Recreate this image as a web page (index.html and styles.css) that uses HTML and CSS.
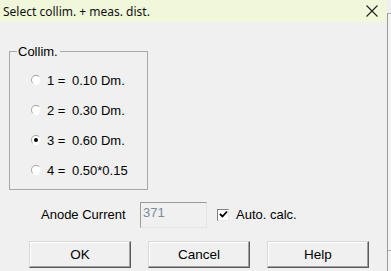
FILE: index.html
```html
<!DOCTYPE html>
<html lang="en">
<head>
    <meta charset="UTF-8">
    <title>Select collim. + meas. dist.</title>
    <link rel="stylesheet" href="styles.css">
</head>
<body>
    <div class="screen">
        <div class="dialog">
            <div class="titlebar">
                <span class="title">Select collim. + meas. dist.</span>
                <span class="close">
                    <svg width="12" height="12" viewBox="0 0 12 12"><path d="M0.5 0.5 L11.5 11.5 M11.5 0.5 L0.5 11.5" stroke="#202020" stroke-width="1.1" fill="none"/></svg>
                </span>
            </div>
            <div class="content">
                <fieldset class="group">
                    <legend>Collim.</legend>
                    <div class="radio-row">
                        <span class="radio"></span>
                        <span class="num">1 =</span><span>0.10 Dm.</span>
                    </div>
                    <div class="radio-row">
                        <span class="radio"></span>
                        <span class="num">2 =</span><span>0.30 Dm.</span>
                    </div>
                    <div class="radio-row">
                        <span class="radio checked"></span>
                        <span class="num">3 =</span><span>0.60 Dm.</span>
                    </div>
                    <div class="radio-row">
                        <span class="radio"></span>
                        <span class="num">4 =</span><span>0.50*0.15</span>
                    </div>
                </fieldset>
                <div class="anode-row">
                    <span class="label">Anode Current</span>
                    <div class="textbox">371</div>
                    <span class="checkbox">
                        <svg width="9" height="9" viewBox="0 0 9 9"><path d="M1 4 L3.5 6.5 L8 1.5" stroke="#000" stroke-width="1.8" fill="none"/></svg>
                    </span>
                    <span>Auto. calc.</span>
                </div>
                <div class="buttons">
                    <div class="btn">OK</div>
                    <div class="btn">Cancel</div>
                    <div class="btn">Help</div>
                </div>
            </div>
        </div>
        <div class="edge"><div class="stub"></div></div>
    </div>
</body>
</html>
```
FILE: styles.css
```css
* { margin: 0; padding: 0; box-sizing: border-box; }
body { background-color: #f0f0f0; color: #000000; font-family: 'Liberation Sans', Arial, sans-serif; font-size: 13px; width: 391px; height: 271px; overflow: hidden; }
.screen { display: flex; height: 271px; }
.dialog { width: 387px; height: 271px; display: flex; flex-direction: column; }
.titlebar { height: 22px; background-color: #f0f7da; display: flex; align-items: center; justify-content: space-between; padding-left: 3px; padding-right: 9px; }
.title { font-family: 'Noto Sans', sans-serif; font-size: 12px; color: #111111; }
.close { display: flex; margin-top: -1px; }
.content { flex: 1; }
.group { margin: 22px 0 0 9px; width: 139px; height: 146px; border: 1px solid #a8a8a8; padding: 6px 0 0 0; }
.group legend { margin-left: 7px; padding: 0 2px 0 1px; line-height: 15px; }
.radio-row { height: 30px; display: flex; align-items: center; padding-left: 21px; }
.radio { width: 10px; height: 10px; border-radius: 50%; border: 1px solid; border-color: #a4a4a4 #f4f4f4 #ffffff #aaaaaa; background-color: #ffffff; margin-right: 6px; display: flex; align-items: center; justify-content: center; }
.radio.checked::after { content: ''; width: 4px; height: 4px; border-radius: 50%; background-color: #000000; }
.num { width: 25px; }
.anode-row { display: flex; align-items: center; margin: 11px 0 0 41px; height: 27px; }
.label { width: 99px; }
.textbox { width: 67px; height: 26px; border: 1px solid; border-color: #9c9c9c #e4e4e4 #e4e4e4 #9c9c9c; color: #7d8a99; padding: 3px 0 0 2px; line-height: 14px; }
.checkbox { width: 12px; height: 12px; margin: 0 7px 0 10px; background-color: #ffffff; border: 1px solid; border-color: #808080 #e8e8e8 #e8e8e8 #808080; display: flex; align-items: center; justify-content: center; }
.buttons { display: flex; gap: 17px; margin: 13px 0 0 29px; }
.btn { width: 102px; height: 27px; display: flex; align-items: center; justify-content: center; border: 1px solid; border-color: #d8d8d8 #5a5a5a #5a5a5a #d8d8d8; box-shadow: inset -1px -1px 0 #a0a0a0, inset 1px 1px 0 #ffffff; font-size: 13.5px; }
.edge { flex: 1; margin-top: 13px; border-left: 1px solid #9a9a9a; border-top: 1px solid #b0b0b0; background-color: #f4f4f4; position: relative; }
.stub { position: absolute; left: 0; right: 0; top: 236px; border-top: 1px solid #b0b0b0; }
```
